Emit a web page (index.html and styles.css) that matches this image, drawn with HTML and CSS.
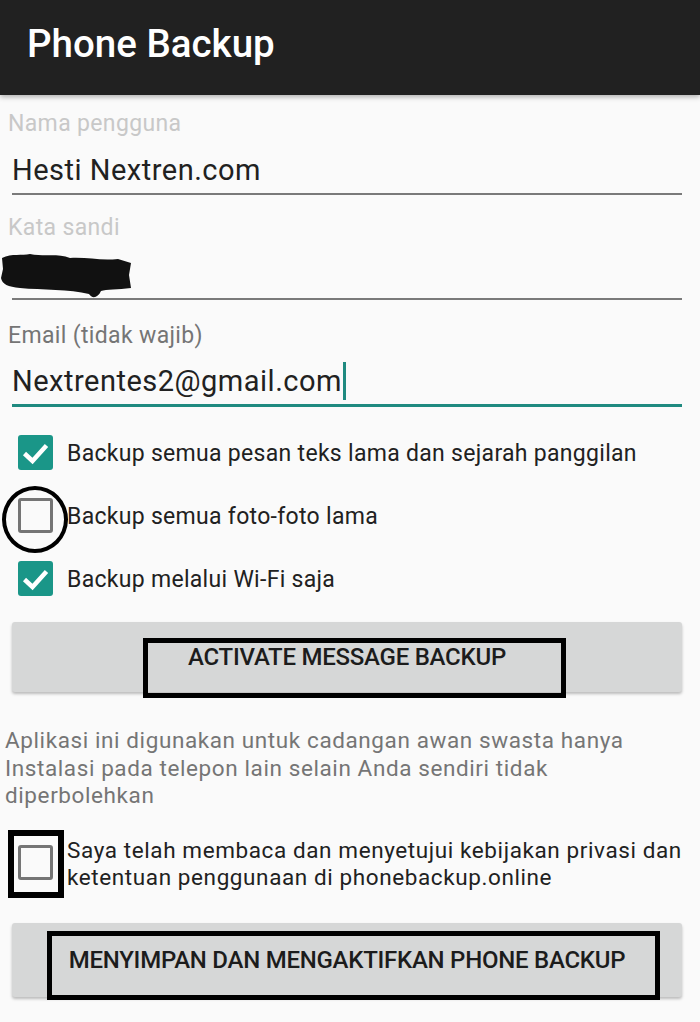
FILE: index.html
```html
<!DOCTYPE html>
<html lang="id">
<head>
    <meta charset="UTF-8">
    <title>Phone Backup</title>
    <link rel="stylesheet" href="styles.css">
</head>
<body>
<div class="appbar">
    <div class="title">Phone Backup</div>
</div>
<div class="form">
    <div class="field">
        <div class="label">Nama pengguna</div>
        <div class="value">Hesti Nextren.com</div>
    </div>
    <div class="field">
        <div class="label">Kata sandi</div>
        <div class="value secret">
            <svg class="scribble" width="134" height="50" viewBox="0 0 134 50">
                <path d="M2,7 C12,2 22,5 30,3 C45,6 58,2 70,7 C88,6 100,10 118,8 L131,12 L129,24 L131,37 C118,39 106,38 101,40 C98,47 92,48 89,43 C70,38 42,39 20,37 C8,36 2,33 1,27 L3,18 Z" fill="#111"/>
            </svg>
        </div>
    </div>
    <div class="field focused">
        <div class="label">Email (tidak wajib)</div>
        <div class="value">Nextrentes2@gmail.com<span class="cursor"></span></div>
    </div>

    <div class="checks">
        <div class="check">
            <div class="box on">
                <svg width="35" height="35" viewBox="0 0 35 35"><polyline points="6.5,18.5 14.5,26 28.5,10.5" fill="none" stroke="#fff" stroke-width="4.5"/></svg>
            </div>
            <span>Backup semua pesan teks lama dan sejarah panggilan</span>
        </div>
        <div class="check">
            <div class="box">
                <div class="mark-circle"></div>
            </div>
            <span>Backup semua foto-foto lama</span>
        </div>
        <div class="check">
            <div class="box on">
                <svg width="35" height="35" viewBox="0 0 35 35"><polyline points="6.5,18.5 14.5,26 28.5,10.5" fill="none" stroke="#fff" stroke-width="4.5"/></svg>
            </div>
            <span>Backup melalui Wi-Fi saja</span>
        </div>
    </div>

    <div class="button first">
        <span class="caption">ACTIVATE MESSAGE BACKUP</span>
        <div class="mark-rect"></div>
    </div>

    <p class="note">Aplikasi ini digunakan untuk cadangan awan swasta hanya<br>Instalasi pada telepon lain selain Anda sendiri tidak<br>diperbolehkan</p>

    <div class="agree">
        <div class="box">
            <div class="mark-square"></div>
        </div>
        <span>Saya telah membaca dan menyetujui kebijakan privasi dan<br>ketentuan penggunaan di phonebackup.online</span>
    </div>

    <div class="button second">
        <span class="caption">MENYIMPAN DAN MENGAKTIFKAN PHONE BACKUP</span>
        <div class="mark-rect"></div>
    </div>
</div>
</body>
</html>
```

FILE: styles.css
```css
* {
    padding: 0;
    margin: 0;
    box-sizing: border-box;
}

html, body {
    width: 100%;
    height: 100%;
    background: #fafafa;
    font-family: Roboto, "Noto Sans", sans-serif;
    overflow: hidden;
}

.appbar {
    height: 95px;
    background: #212121;
    padding: 25px 27px 0;
    box-shadow: 0 2px 5px rgba(0, 0, 0, 0.3);
    position: relative;
}

.title {
    color: #ffffff;
    font-size: 38.5px;
    font-weight: 500;
    line-height: 38px;
}

.form {
    padding: 15px 18px 0 12px;
}

.label {
    font-size: 23px;
    letter-spacing: 0.35px;
    line-height: 28px;
    color: #c8c8c8;
    margin-left: -4px;
}

.value {
    font-size: 29px;
    letter-spacing: 0.5px;
    line-height: 36px;
    color: #212121;
    margin-top: 14px;
    padding-bottom: 5px;
    border-bottom: 2px solid #7a7a7a;
}

.field + .field {
    margin-top: 19px;
}

.secret {
    height: 58px;
    margin-top: 0;
    padding: 0;
    position: relative;
}

.scribble {
    position: absolute;
    left: -12px;
    top: 9px;
    filter: blur(0.7px);
}

.focused {
    margin-top: 22px !important;
}

.focused .label {
    color: #757575;
}

.focused .value {
    margin-top: 12px;
    padding-bottom: 4px;
    border-bottom: 3px solid #1f8a80;
}

.cursor {
    display: inline-block;
    width: 3px;
    height: 38px;
    background: #1f8a80;
    vertical-align: -9px;
    margin-left: 1px;
}

.checks {
    margin-top: 28px;
    display: flex;
    flex-direction: column;
    gap: 28px;
}

.check {
    display: flex;
    align-items: center;
    height: 35px;
}

.check span {
    font-size: 23px;
    letter-spacing: 0.3px;
    color: #212121;
    margin-left: 14px;
    padding-top: 2px;
}

.box {
    width: 35px;
    height: 35px;
    border: 3px solid #757575;
    border-radius: 3px;
    margin-left: 6px;
    flex-shrink: 0;
    position: relative;
}

.box.on {
    background: #1a9688;
    border: none;
}

.box svg {
    display: block;
}

.mark-circle {
    position: absolute;
    left: -19px;
    top: -15px;
    width: 66px;
    height: 67px;
    border: 4px solid #000;
    border-radius: 50%;
}

.button {
    position: relative;
    height: 70px;
    margin-top: 26px;
    background: #d6d7d7;
    border-radius: 3px;
    box-shadow: 0 2px 3px rgba(0, 0, 0, 0.25);
    display: flex;
    justify-content: center;
    align-items: center;
}

.caption {
    font-size: 24px;
    font-weight: 500;
    letter-spacing: -0.25px;
    color: #1c1c1c;
    white-space: nowrap;
}

.mark-rect {
    position: absolute;
    border: 5px solid #000;
}

.first .mark-rect {
    left: 131px;
    top: 16px;
    width: 423px;
    height: 60px;
}

.second {
    height: 74px;
    margin-top: 32px;
}

.second .mark-rect {
    left: 35px;
    top: 8px;
    width: 613px;
    height: 69px;
}

.note {
    margin: 35px 0 0 -7px;
    font-size: 22.5px;
    letter-spacing: 0.6px;
    line-height: 27.5px;
    color: #757575;
    white-space: nowrap;
}

.agree {
    display: flex;
    align-items: flex-start;
    margin-top: 27px;
}

.agree .box {
    margin-top: 8px;
}

.agree span {
    font-size: 22.5px;
    letter-spacing: 0.6px;
    line-height: 27px;
    color: #212121;
    margin-left: 14px;
    white-space: nowrap;
}

.mark-square {
    position: absolute;
    left: -13px;
    top: -18px;
    width: 56px;
    height: 68px;
    border: 6px solid #000;
}
```
